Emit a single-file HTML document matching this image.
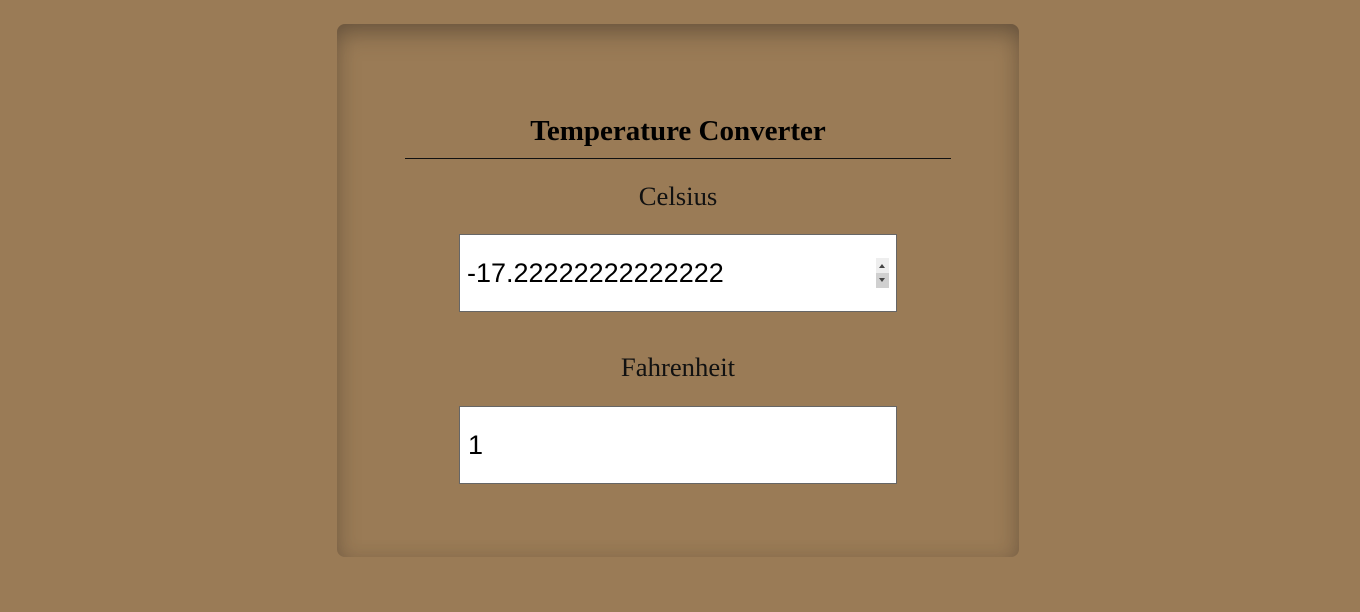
<!DOCTYPE html>
<html><head><style>
body{margin:0;background:#9a7b56;width:1360px;height:612px;overflow:hidden;font-family:"Liberation Serif",serif;}
.card{position:absolute;left:337px;top:24px;width:682px;height:533px;border-radius:8px;box-shadow:inset 0 12px 25px -5px rgba(60,50,40,.5),inset 0 0 18px rgba(60,50,40,.15);background:#9a7b56;}
h2{position:absolute;left:68px;width:546px;top:90px;margin:0;text-align:center;font-size:29px;font-weight:bold;line-height:34px;color:#000;}
.hr{position:absolute;left:68px;width:546px;top:134px;height:1px;background:#111;}
.lbl{position:absolute;left:0;width:682px;text-align:center;font-size:26.7px;color:#111;}
.inp{position:absolute;left:122px;width:436px;height:76px;background:#fff;border:1px solid #666;font-family:"Liberation Sans",sans-serif;font-size:27px;line-height:76px;box-sizing:content-box;}
.sp{position:absolute;right:7px;top:23px;width:13px;height:30px;}
</style></head><body>
<div class="card">
<h2>Temperature Converter</h2>
<div class="hr"></div>
<div class="lbl" style="top:157px">Celsius</div>
<div class="inp" style="top:210px"><span style="padding-left:7px">-17.22222222222222</span>
<div class="sp"><div style="height:15px;background:#eee;position:relative"><div style="position:absolute;left:3px;top:6px;border:3.5px solid transparent;border-bottom:4px solid #444;border-top:0"></div></div><div style="height:15px;background:#d0d0d0;position:relative"><div style="position:absolute;left:3px;top:5px;border:3.5px solid transparent;border-top:4px solid #444;border-bottom:0"></div></div></div></div>
<div class="lbl" style="top:328px">Fahrenheit</div>
<div class="inp" style="top:382px"><span style="padding-left:8px">1</span></div>
</div>
</body></html>
